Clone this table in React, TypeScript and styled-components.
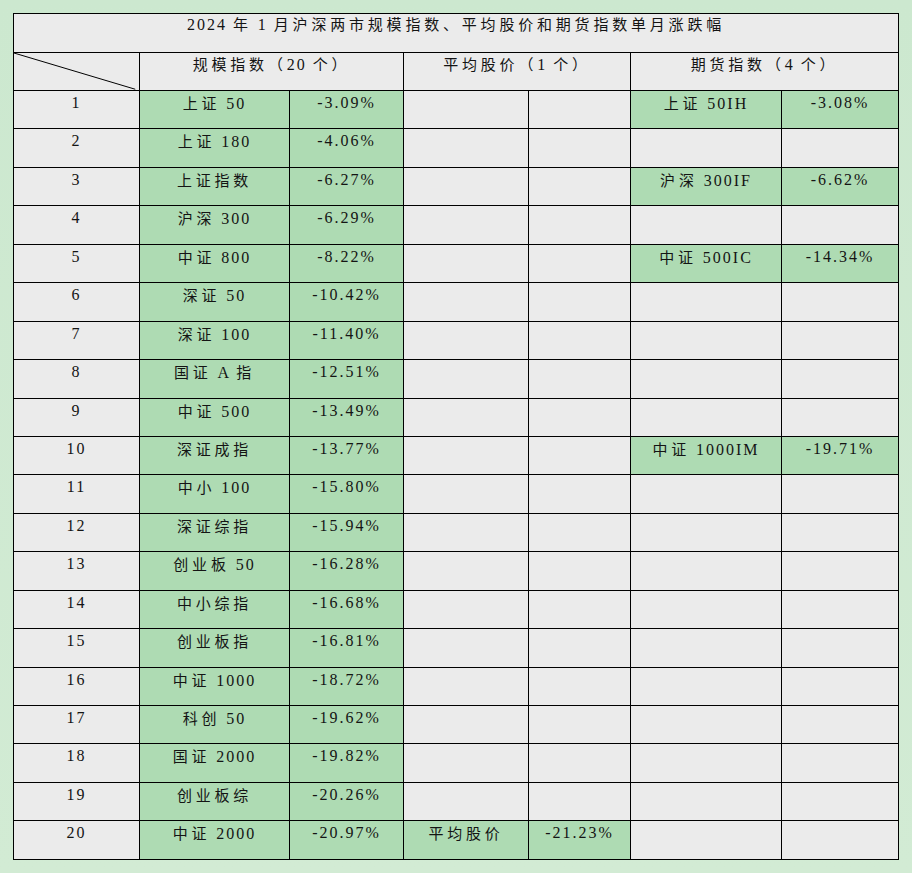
import React from "react";
import styled, { createGlobalStyle } from "styled-components";

const GlobalStyle = createGlobalStyle`
  html, body {
    margin: 0;
    padding: 0;
    background: #cfe9d1;
  }
  body {
    font-family: "Liberation Serif", "Noto Sans CJK SC", serif;
    color: #141414;
  }
`;

const Page = styled.div`
  width: 912px;
  height: 873px;
  box-sizing: border-box;
  padding: 13px 14px 14px 13px;
  background: linear-gradient(#cce8cf, #d2ebd4);
`;

const Table = styled.table`
  width: 885px;
  border-collapse: collapse;
  table-layout: fixed;
`;

const Row = styled.tr<{ $h: number }>`
  height: ${(p) => p.$h}px;
`;

const Cell = styled.td<{ $tone?: "green" | "gray"; $top?: number }>`
  border: 1px solid #000;
  background: ${(p) => (p.$tone === "green" ? "#aedbb3" : "#ebebeb")};
  vertical-align: top;
  text-align: center;
  padding: ${(p) => p.$top ?? 2}px 0 0 0;
  font-size: 16px;
  line-height: 20px;
  letter-spacing: 2px;
  white-space: nowrap;
  overflow: hidden;
`;

const Corner = styled(Cell)`
  position: relative;
`;

const Diagonal = styled.svg`
  position: absolute;
  left: 0;
  top: 0;
  width: 100%;
  height: 100%;
`;

const Han = styled.span`
  font-family: "Noto Sans CJK SC", sans-serif;
  font-size: 15px;
  letter-spacing: 3.8px;
`;

const HAN_RE = /([\u3000-\u303f\u4e00-\u9fff\uff00-\uffef]+)/;

function Txt({ children }: { children: string }) {
  return (
    <>
      {children.split(HAN_RE).map((p, i) =>
        i % 2 ? <Han key={i}>{p}</Han> : <React.Fragment key={i}>{p}</React.Fragment>
      )}
    </>
  );
}

const scale: [string, string][] = [
  ["上证 50", "-3.09%"],
  ["上证 180", "-4.06%"],
  ["上证指数", "-6.27%"],
  ["沪深 300", "-6.29%"],
  ["中证 800", "-8.22%"],
  ["深证 50", "-10.42%"],
  ["深证 100", "-11.40%"],
  ["国证 A 指", "-12.51%"],
  ["中证 500", "-13.49%"],
  ["深证成指", "-13.77%"],
  ["中小 100", "-15.80%"],
  ["深证综指", "-15.94%"],
  ["创业板 50", "-16.28%"],
  ["中小综指", "-16.68%"],
  ["创业板指", "-16.81%"],
  ["中证 1000", "-18.72%"],
  ["科创 50", "-19.62%"],
  ["国证 2000", "-19.82%"],
  ["创业板综", "-20.26%"],
  ["中证 2000", "-20.97%"],
];

const avg: Record<number, [string, string]> = {
  20: ["平均股价", "-21.23%"],
};

const futures: Record<number, [string, string]> = {
  1: ["上证 50IH", "-3.08%"],
  3: ["沪深 300IF", "-6.62%"],
  5: ["中证 500IC", "-14.34%"],
  10: ["中证 1000IM", "-19.71%"],
};

const widths = [126, 150, 114, 125, 102, 151, 117];

function Pair({ item }: { item?: [string, string] }) {
  if (!item) {
    return (
      <>
        <Cell />
        <Cell />
      </>
    );
  }
  return (
    <>
      <Cell $tone="green">
        <Txt>{item[0]}</Txt>
      </Cell>
      <Cell $tone="green">
        <Txt>{item[1]}</Txt>
      </Cell>
    </>
  );
}

export default function App() {
  return (
    <>
      <GlobalStyle />
      <Page>
        <Table>
          <colgroup>
            {widths.map((w, i) => (
              <col key={i} style={{ width: w }} />
            ))}
          </colgroup>
          <tbody>
            <Row $h={39}>
              <Cell colSpan={7} $top={0}>
                <Txt>2024 年 1 月沪深两市规模指数、平均股价和期货指数单月涨跌幅</Txt>
              </Cell>
            </Row>
            <Row $h={38}>
              <Corner>
                <Diagonal viewBox="0 0 100 100" preserveAspectRatio="none">
                  <line
                    x1="0"
                    y1="0"
                    x2="97"
                    y2="98"
                    stroke="#000"
                    strokeWidth="1"
                    vectorEffect="non-scaling-stroke"
                  />
                </Diagonal>
              </Corner>
              <Cell colSpan={2} $top={1}>
                <Txt>规模指数（20 个）</Txt>
              </Cell>
              <Cell colSpan={2} $top={1}>
                <Txt>平均股价（1 个）</Txt>
              </Cell>
              <Cell colSpan={2} $top={1}>
                <Txt>期货指数（4 个）</Txt>
              </Cell>
            </Row>
            {scale.map((s, i) => {
              const n = i + 1;
              return (
                <Row key={n} $h={38.45}>
                  <Cell>{String(n)}</Cell>
                  <Pair item={s} />
                  <Pair item={avg[n]} />
                  <Pair item={futures[n]} />
                </Row>
              );
            })}
          </tbody>
        </Table>
      </Page>
    </>
  );
}
